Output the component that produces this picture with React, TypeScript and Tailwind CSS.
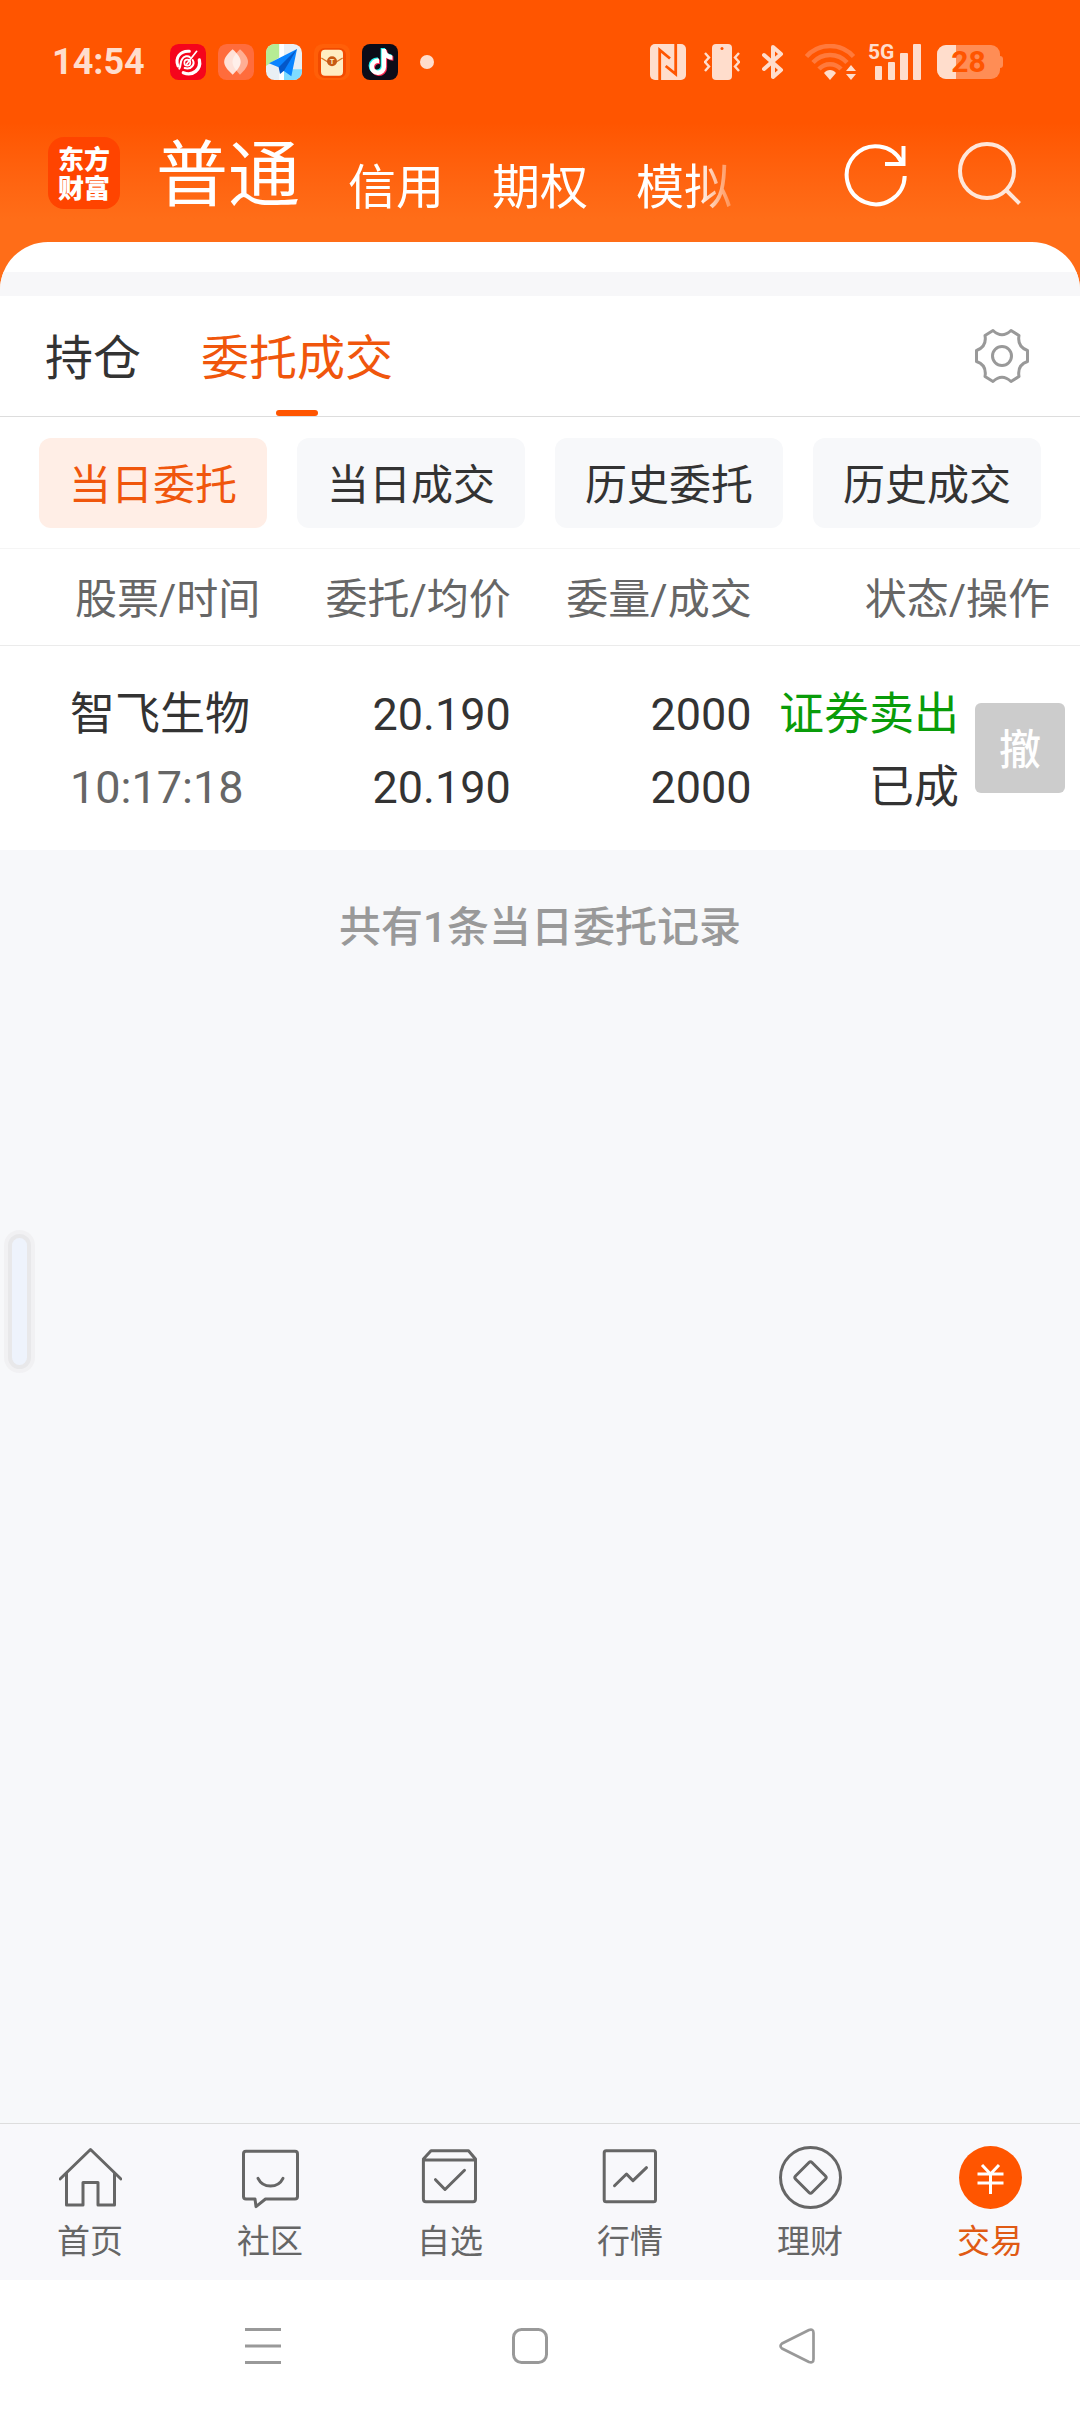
import { useState } from "react";
import type { ReactNode } from "react";
import { FaTiktok } from "react-icons/fa6";

const ACCOUNT_TABS = ["普通", "信用", "期权", "模拟"];
const PAGE_TABS = ["持仓", "委托成交"];
const FILTERS = ["当日委托", "当日成交", "历史委托", "历史成交"];

interface Order {
  name: string;
  time: string;
  price: string;
  avgPrice: string;
  amount: string;
  filled: string;
  side: string;
  status: string;
}

const ORDERS: Order[] = [
  {
    name: "智飞生物",
    time: "10:17:18",
    price: "20.190",
    avgPrice: "20.190",
    amount: "2000",
    filled: "2000",
    side: "证券卖出",
    status: "已成",
  },
];

/** 状态栏左侧的通知图标 */
function NotificationIcons() {
  return (
    <div className="flex items-center gap-3">
      <svg viewBox="0 0 108 108" className="size-9">
        <rect width="108" height="108" rx="26" fill="#f5051c" />
        <g fill="none" stroke="#fff" strokeLinecap="round">
          <path d="M58 22C30 20 14 42 24 66" strokeWidth="9" />
          <path d="M28 74C34 62 30 54 36 46C42 36 54 34 60 40" strokeWidth="6" />
          <path d="M40 86C68 98 94 76 88 48" strokeWidth="10" />
          <path d="M44 72C64 78 76 60 68 48" strokeWidth="6" />
          <path d="M80 22L50 60" strokeWidth="5" />
          <circle cx="52" cy="56" r="9" strokeWidth="5" />
        </g>
      </svg>
      <svg viewBox="0 0 108 108" className="size-9">
        <rect width="108" height="108" rx="26" fill="#ff6c3c" />
        <path d="M66 16C36 46 36 62 66 92C98 62 98 46 66 16Z" fill="#fff" opacity=".45" />
        <path d="M44 16C10 46 10 62 44 92C76 62 76 46 44 16Z" fill="#fff" opacity=".8" />
      </svg>
      <svg viewBox="0 0 108 108" className="size-9">
        <clipPath id="map-clip">
          <rect width="108" height="108" rx="26" />
        </clipPath>
        <g clipPath="url(#map-clip)">
          <rect width="108" height="108" fill="#e9eff4" />
          <path d="M0 0H40V40L0 66Z" fill="#b6ec94" />
          <path d="M40 0H54V108H40Z" fill="#fff" />
          <path d="M54 76H108V108H54Z" fill="#7fdcff" />
          <path d="M93 15L9 58L38 70L76 97Z" fill="#0a84ff" />
          <path d="M93 15L38 70L42 90L54 80Z" fill="#0457c8" />
        </g>
      </svg>
      <svg viewBox="0 0 108 108" className="size-9">
        <rect width="108" height="108" rx="26" fill="#ff5f08" />
        <rect x="12" y="12" width="84" height="90" rx="20" fill="#f24a00" />
        <rect x="21" y="17" width="66" height="78" rx="12" fill="#ffedc2" />
        <path d="M22 42L42 54H66L86 42" fill="none" stroke="#d9772b" strokeWidth="4" />
        <circle cx="54" cy="52" r="15" fill="#c75a14" />
        <text x="54" y="60" textAnchor="middle" fontSize="22" fontWeight="700" fill="#ffedc2">
          T
        </text>
      </svg>
      <div className="relative size-9 rounded-lg bg-[#0c0c18]">
        <FaTiktok className="absolute left-[5px] top-[4px] size-[26px] text-[#25f4ee]" />
        <FaTiktok className="absolute left-[7px] top-[6px] size-[26px] text-[#fe2c55]" />
        <FaTiktok className="absolute left-[6px] top-[5px] size-[26px] text-white" />
      </div>
      <span className="ml-[10px] size-[14px] rounded-full bg-white/80" />
    </div>
  );
}

/** 状态栏右侧的系统图标 */
function SystemIcons() {
  return (
    <div className="flex items-center text-[#ffddcc]">
      <svg viewBox="0 0 36 36" className="size-9">
        <rect width="36" height="36" rx="5" fill="currentColor" />
        <path
          d="M9.700 36V6L20 14.500M25.700 0V30L15.700 22"
          fill="none"
          stroke="#ff5500"
          strokeWidth="2.800"
        />
      </svg>
      <svg viewBox="0 0 36 36" className="ml-[18px] size-9">
        <rect x="8" width="20" height="36" rx="4" fill="currentColor" />
        <circle cx="18" cy="4.500" r="1.500" fill="#ff5500" />
        <path
          d="M1 9L5 13.500L1 18L5 22.500L1 27M35 9L31 13.500L35 18L31 22.500L35 27"
          fill="none"
          stroke="currentColor"
          strokeWidth="2.400"
        />
      </svg>
      <svg viewBox="0 0 22 36" className="ml-[22px] h-9 w-[22px]">
        <path
          d="M2 11L19 26L11 33V3L19 10L2 25"
          fill="none"
          stroke="currentColor"
          strokeWidth="4"
          strokeLinecap="round"
          strokeLinejoin="round"
        />
      </svg>
      <svg viewBox="0 0 52 36" className="ml-[21px] h-9 w-[52px]">
        <g fill="none" stroke="#ff7a3c" strokeWidth="4.500">
          <path d="M1.500 12.500C14 -1.500 36 -1.500 48.500 12.500" />
          <path d="M8 18.500C17 8.500 33 8.500 42 18.500" />
          <path d="M14 25C20 18.500 30 18.500 36 25" />
        </g>
        <path d="M25 36L19 29C22 25 28 25 31 29Z" fill="currentColor" />
        <path d="M46 21L51 27H41ZM46 36L51 30H41Z" fill="currentColor" />
      </svg>
      <svg viewBox="0 0 52 36" className="ml-3 h-9 w-[52px] overflow-visible">
        <text x="-1" y="15" fontSize="21" fontWeight="700" fill="currentColor">
          5G
        </text>
        <g fill="currentColor">
          <rect x="6" y="22" width="7" height="14" rx="1" />
          <rect x="19" y="18" width="7" height="18" rx="1" />
          <rect x="31" y="9" width="8" height="27" rx="1" />
          <rect x="44" width="8" height="36" rx="1" />
        </g>
      </svg>
      <div className="ml-4 flex items-center">
        <div className="relative flex h-[34px] w-[63px] items-center justify-center overflow-hidden rounded-[9px] bg-[#ff8d55]">
          <span className="absolute inset-y-0 left-0 w-[30%] bg-[#ffddcc]" />
          <span className="relative text-[30px] font-bold leading-none text-[#ff5500]">28</span>
        </div>
        <span className="h-3 w-[3px] rounded-r-full bg-[#ff8d55]" />
      </div>
    </div>
  );
}

function GearIcon() {
  return (
    <svg viewBox="-28 -28 56 56" className="size-14" fill="none" stroke="#999" strokeWidth="3">
      <path
        strokeLinejoin="round"
        d="M-9 -25.500Q0 -17 9 -25.500L17 -20.500Q15 -9 25.500 -5.500V5.500Q15 9 17 20.500L9 25.500Q0 17 -9 25.500L-17 20.500Q-15 9 -25.500 5.500V-5.500Q-15 -9 -17 -20.500Z"
      />
      <circle r="9.500" />
    </svg>
  );
}

function NavIcon({ children }: { children: ReactNode }) {
  return (
    <svg
      viewBox="0 0 63 63"
      className="size-[63px]"
      fill="none"
      stroke="#666"
      strokeWidth="3"
      strokeLinecap="round"
      strokeLinejoin="round"
    >
      {children}
    </svg>
  );
}

const NAV_ITEMS = [
  {
    label: "首页",
    icon: (
      <NavIcon>
        <path d="M1 33L31.500 3.500L62 33M7.500 27V59H24V36.500H39V59H55.500V27" />
      </NavIcon>
    ),
  },
  {
    label: "社区",
    icon: (
      <NavIcon>
        <path d="M7 5.300H56Q58.500 5.300 58.500 8V50.500Q58.500 53 56 53H26.500L17 60.600L16 53H7Q4.500 53 4.500 50.500V8Q4.500 5.300 7 5.300Z" />
        <path d="M19 32.300C24 42.500 39 42.500 44 32.300" />
      </NavIcon>
    ),
  },
  {
    label: "自选",
    icon: (
      <NavIcon>
        <path d="M4.400 14V53Q4.400 55.700 7 55.700H54Q56.500 55.700 56.500 53V13L49.500 4.700H12L4.400 13M4.400 14H56.500" />
        <path d="M16.500 33.700L26 43.500L45.500 24.300" />
      </NavIcon>
    ),
  },
  {
    label: "行情",
    icon: (
      <NavIcon>
        <rect x="5.200" y="4.700" width="51.300" height="51" rx="2" />
        <path d="M15.500 39.700L27.500 28L34 34.700L47.500 21.700" />
      </NavIcon>
    ),
  },
  {
    label: "理财",
    icon: (
      <NavIcon>
        <circle cx="31.500" cy="31.500" r="30" />
        <path d="M30 16.500Q31.500 15 33 16.500L46.500 30Q48 31.500 46.500 33L33 46.500Q31.500 48 30 46.500L16.500 33Q15 31.500 16.500 30Z" />
      </NavIcon>
    ),
  },
  {
    label: "交易",
    icon: (
      <NavIcon>
        <circle cx="31.500" cy="31.500" r="31.500" fill="#ff5500" stroke="none" />
        <path
          d="M23 19L31.500 28L40 19M18.500 28H44.500M18.500 37H44.500M31.500 28V48"
          stroke="#fff"
          strokeLinecap="butt"
        />
      </NavIcon>
    ),
  },
];

function App() {
  const [account, setAccount] = useState("普通");
  const [pageTab, setPageTab] = useState("委托成交");
  const [filter, setFilter] = useState("当日委托");
  const [nav, setNav] = useState("交易");

  return (
    <div className="flex min-h-screen flex-col bg-[#f7f8fa] font-['Roboto','Noto_Sans_CJK_SC',sans-serif] text-[#333]">
      <header className="bg-linear-to-b from-[#ff5500] from-38% to-[#ff6d18] to-68% pb-[80px]">
        {/* 状态栏 */}
        <div className="flex h-[124px] items-center justify-between pl-[52px] pr-[77px]">
          <div className="flex items-center gap-[25px]">
            <span className="text-[36px] font-bold leading-none text-[#ffddcc]">14:54</span>
            <NotificationIcons />
          </div>
          <SystemIcons />
        </div>

        {/* 账户类型 */}
        <div className="flex items-center justify-between pb-[30px] pl-12 pr-[57px] pt-[10px]">
          <div className="flex items-center gap-9">
            <div className="flex size-[72px] items-center justify-center rounded-2xl bg-[#ff4400] pb-[3px] font-['Noto_Sans_CJK_SC',sans-serif] text-[26px] font-black leading-[29px] text-white">
              <span className="w-[52px]">东方财富</span>
            </div>
            <nav className="flex items-end gap-12 pr-3 pt-[6px] [mask-image:linear-gradient(to_right,black_92%,transparent)]">
              {ACCOUNT_TABS.map((tab) => (
                <button
                  key={tab}
                  onClick={() => setAccount(tab)}
                  className={
                    tab === account
                      ? "text-[72px] leading-none text-white"
                      : "text-[48px] leading-none text-white"
                  }
                >
                  {tab}
                </button>
              ))}
            </nav>
          </div>
          <div className="flex items-center gap-12 pt-[3px]">
            <button aria-label="刷新">
              <svg viewBox="0 0 66 66" className="size-[66px]" fill="none" stroke="#fff" strokeWidth="4">
                <path d="M61.700 34A29 29 0 1 1 58.500 20M60.500 4V22H42" />
              </svg>
            </button>
            <button aria-label="搜索">
              <svg viewBox="0 0 66 66" className="size-[66px]" fill="none" stroke="#ffe6d9" strokeWidth="4">
                <circle cx="30" cy="29" r="27" />
                <path d="M49 48L62.500 61.500" />
              </svg>
            </button>
          </div>
        </div>
      </header>

      <main className="-mt-[80px] flex-1">
        <div className="overflow-hidden rounded-t-[48px] bg-white pt-[30px]">
          <div className="h-6 bg-[#f7f7f9]" />
        </div>

        <section className="bg-white">
          {/* 页面标签 */}
          <div className="flex h-[121px] items-stretch justify-between border-b border-[#ddd] pl-[45px] pr-[50px]">
            <div className="flex gap-[60px]">
              {PAGE_TABS.map((tab) => (
                <button
                  key={tab}
                  onClick={() => setPageTab(tab)}
                  className={
                    tab === pageTab
                      ? "relative pt-[6px] text-[48px] leading-none text-[#f0560c]"
                      : "relative pt-[6px] text-[48px] leading-none"
                  }
                >
                  {tab}
                  {tab === pageTab && (
                    <span className="absolute bottom-0 left-1/2 h-[6px] w-[42px] -translate-x-1/2 rounded-full bg-[#ff5500]" />
                  )}
                </button>
              ))}
            </div>
            <button aria-label="设置">
              <GearIcon />
            </button>
          </div>

          {/* 筛选 */}
          <div className="grid grid-cols-4 gap-[30px] border-b border-[#f5f5f5] px-[39px] pb-5 pt-[21px]">
            {FILTERS.map((item) => (
              <button
                key={item}
                onClick={() => setFilter(item)}
                className={
                  item === filter
                    ? "h-[90px] rounded-xl bg-[#ffeee6] pt-[6px] text-[42px] leading-none text-[#f0560c]"
                    : "h-[90px] rounded-xl bg-[#f7f8fa] pt-[6px] text-[42px] leading-none"
                }
              >
                {item}
              </button>
            ))}
          </div>

          {/* 委托列表 */}
          <table className="w-full table-fixed border-collapse">
            <thead>
              <tr className="h-24 border-b border-[#ebebeb] text-[42px] leading-none text-[#666]">
                <th className="w-[25%] pl-[75px] pt-[6px] text-left font-normal">股票/时间</th>
                <th className="w-[22.3%] whitespace-nowrap pt-[6px] text-right font-normal">
                  委托/均价
                </th>
                <th className="w-[22.3%] whitespace-nowrap pt-[6px] text-right font-normal">
                  委量/成交
                </th>
                <th className="whitespace-nowrap pr-[30px] pt-[6px] text-right font-normal">
                  状态/操作
                </th>
              </tr>
            </thead>
            <tbody>
              {ORDERS.map((order) => (
                <tr key={order.time} className="h-[205px] text-[45px] leading-[73px]">
                  <td className="pl-[70px] pt-[6px]">
                    <p>{order.name}</p>
                    <p className="text-[#666]">{order.time}</p>
                  </td>
                  <td className="pt-[6px] text-right">
                    <p>{order.price}</p>
                    <p>{order.avgPrice}</p>
                  </td>
                  <td className="pt-[6px] text-right">
                    <p>{order.amount}</p>
                    <p>{order.filled}</p>
                  </td>
                  <td className="pr-[15px]">
                    <div className="flex items-center justify-end gap-4">
                      <div className="whitespace-nowrap pt-[6px] text-right">
                        <p className="text-[#099c09]">{order.side}</p>
                        <p>{order.status}</p>
                      </div>
                      <button
                        disabled
                        className="size-[90px] rounded-md bg-[#ccc] pt-[6px] text-[42px] font-medium leading-none text-white"
                      >
                        撤
                      </button>
                    </div>
                  </td>
                </tr>
              ))}
            </tbody>
          </table>
        </section>

        <p className="pt-[50px] text-center text-[42px] font-medium leading-[56px] text-[#999]">
          共有{ORDERS.length}条当日委托记录
        </p>
      </main>

      {/* 侧边栏手柄 */}
      <div className="absolute left-3 top-[1238px] h-[127px] w-[15px] rounded-full bg-[#eef3fc] shadow-[0_0_0_4px_#e8e8ea,0_0_0_8px_#f1f1f3]" />

      <footer>
        <nav className="grid grid-cols-6 border-t border-[#ddd] bg-[#f8f8fb] pb-[18px] pt-[22px]">
          {NAV_ITEMS.map((item) => (
            <button
              key={item.label}
              onClick={() => setNav(item.label)}
              className={
                item.label === nav
                  ? "flex flex-col items-center gap-[13px] text-[33px] leading-10 text-[#e05a14]"
                  : "flex flex-col items-center gap-[13px] text-[33px] leading-10 text-[#666]"
              }
            >
              {item.icon}
              {item.label}
            </button>
          ))}
        </nav>

        {/* 系统导航键 */}
        <div className="flex h-[132px] items-center justify-center gap-[231px] bg-white pr-5">
          <button aria-label="最近任务">
            <svg viewBox="0 0 36 36" className="size-9" fill="none" stroke="#999" strokeWidth="3">
              <path d="M0 1.500H36M0 18H36M0 34.500H36" />
            </svg>
          </button>
          <button aria-label="主屏幕">
            <svg viewBox="0 0 36 36" className="size-9" fill="none" stroke="#999" strokeWidth="3">
              <rect x="1.500" y="1.500" width="33" height="33" rx="8" />
            </svg>
          </button>
          <button aria-label="返回">
            <svg
              viewBox="0 0 36 36"
              className="size-9"
              fill="none"
              stroke="#999"
              strokeWidth="2.700"
              strokeLinejoin="round"
            >
              <path d="M30 2L3 15.500Q0 18 3 20.500L30 34Q34.500 35.500 34.500 31V5Q34.500 0.500 30 2Z" />
            </svg>
          </button>
        </div>
      </footer>
    </div>
  );
}

export default App;
